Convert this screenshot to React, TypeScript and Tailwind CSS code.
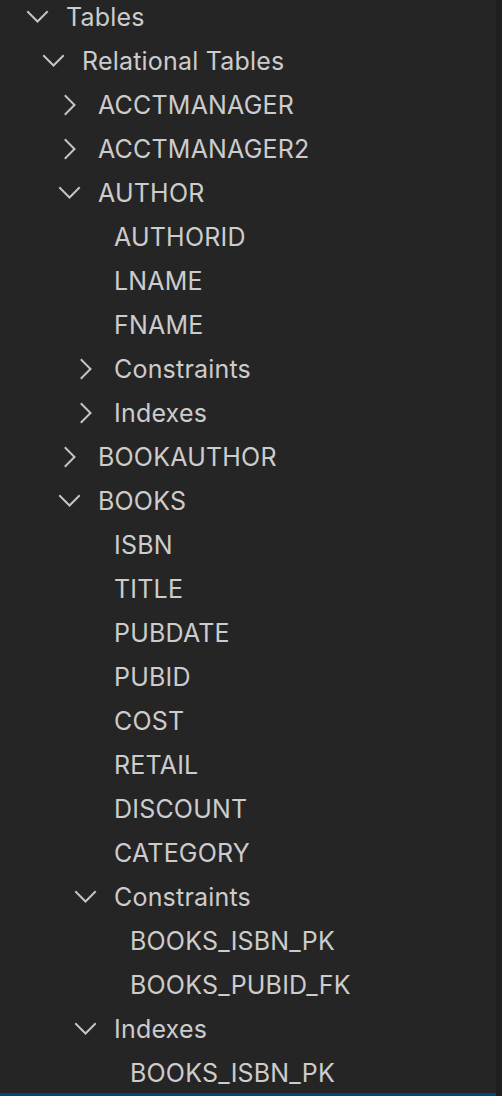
type Row = { label: string; level: number; kind: "open" | "closed" | "leaf" }

const rows: Row[] = [
  { label: "Tables", level: 0, kind: "open" },
  { label: "Relational Tables", level: 1, kind: "open" },
  { label: "ACCTMANAGER", level: 2, kind: "closed" },
  { label: "ACCTMANAGER2", level: 2, kind: "closed" },
  { label: "AUTHOR", level: 2, kind: "open" },
  { label: "AUTHORID", level: 3, kind: "leaf" },
  { label: "LNAME", level: 3, kind: "leaf" },
  { label: "FNAME", level: 3, kind: "leaf" },
  { label: "Constraints", level: 3, kind: "closed" },
  { label: "Indexes", level: 3, kind: "closed" },
  { label: "BOOKAUTHOR", level: 2, kind: "closed" },
  { label: "BOOKS", level: 2, kind: "open" },
  { label: "ISBN", level: 3, kind: "leaf" },
  { label: "TITLE", level: 3, kind: "leaf" },
  { label: "PUBDATE", level: 3, kind: "leaf" },
  { label: "PUBID", level: 3, kind: "leaf" },
  { label: "COST", level: 3, kind: "leaf" },
  { label: "RETAIL", level: 3, kind: "leaf" },
  { label: "DISCOUNT", level: 3, kind: "leaf" },
  { label: "CATEGORY", level: 3, kind: "leaf" },
  { label: "Constraints", level: 3, kind: "open" },
  { label: "BOOKS_ISBN_PK", level: 4, kind: "leaf" },
  { label: "BOOKS_PUBID_FK", level: 4, kind: "leaf" },
  { label: "Indexes", level: 3, kind: "open" },
  { label: "BOOKS_ISBN_PK", level: 4, kind: "leaf" },
]

function Chevron({ open }: { open: boolean }) {
  return (
    <svg width="32" height="32" viewBox="0 0 32 32" fill="none" className="shrink-0">
      <polyline
        points={open ? "6,11 15.5,20.5 25,11" : "11.5,7 20.5,16 11.5,25"}
        stroke="#c5c5c5"
        strokeWidth="2"
        strokeLinecap="square"
      />
    </svg>
  )
}

function TreeRow({ row }: { row: Row }) {
  const isLeaf = row.kind === "leaf"
  return (
    <div
      className="flex items-center h-[44px] text-[#cccccc]"
      style={{ paddingLeft: 22 + row.level * 16 }}
    >
      {isLeaf ? <div className="w-[32px] shrink-0" /> : <Chevron open={row.kind === "open"} />}
      <span className="ml-[12px] pt-[2px] whitespace-nowrap tracking-[0.2px]">{row.label}</span>
    </div>
  )
}

export default function App() {
  return (
    <div className="flex h-[1096px] w-[502px] overflow-hidden bg-[#252526] text-[25px] font-['Inter',sans-serif]">
      <div className="flex-1 overflow-hidden">
        <div className="-mt-[5px]">
          {rows.map((r, i) => (
            <TreeRow key={i} row={r} />
          ))}
          <div className="-mt-[2px] h-[44px] bg-[#094771]" />
        </div>
      </div>
      <div className="w-[6px] bg-[#1e1e1e]" />
    </div>
  )
}
